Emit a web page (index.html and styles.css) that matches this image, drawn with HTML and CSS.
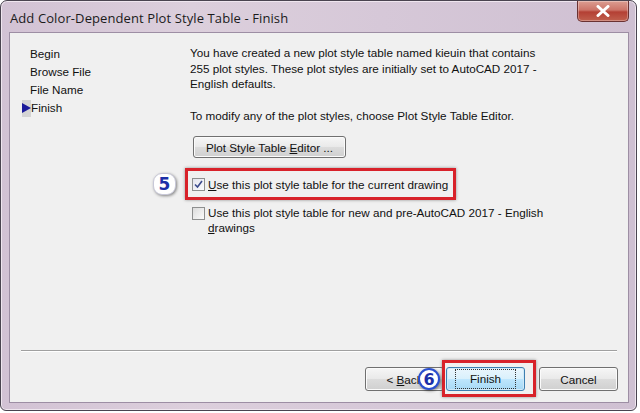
FILE: index.html
```html
<!DOCTYPE html>
<html>
<head>
<meta charset="utf-8">
<link rel="stylesheet" href="styles.css">
</head>
<body>
<div class="window">
  <div class="titlebar">
    <span class="title">Add Color-Dependent Plot Style Table - Finish</span>
    <div class="close">
      <svg width="14" height="12" viewBox="0 0 14 12"><path d="M2 1.5 L12 10.5 M12 1.5 L2 10.5" stroke="#fff" stroke-width="3" stroke-linecap="round"/></svg>
    </div>
  </div>
  <div class="client">
    <div class="main">
      <ul class="nav">
        <li>Begin</li>
        <li>Browse File</li>
        <li>File Name</li>
        <li class="current"><span class="marker"><svg width="9" height="10" viewBox="0 0 9 10"><path d="M0 0 L9 5 L0 10 Z" fill="#1a1a9a"/></svg></span>Finish</li>
      </ul>
      <div class="content">
        <p class="para">You have created a new plot style table named kieuin that contains 255 plot styles. These plot styles are initially set to AutoCAD 2017 - English defaults.</p>
        <p class="para second">To modify any of the plot styles, choose Plot Style Table Editor.</p>
        <button class="btn editor">Plot Style Table <u>E</u>ditor ...</button>
        <div class="check first">
          <span class="badge badge5">5</span>
          <span class="redbox box1"></span>
          <span class="cbox checked"><svg width="9" height="9" viewBox="0 0 9 9"><path d="M1 4.5 L3.5 7 L8 1" stroke="#3b4a8c" stroke-width="1.6" fill="none"/></svg></span>
          <span class="label"><u>U</u>se this plot style table for the current drawing</span>
        </div>
        <div class="check secondcheck">
          <span class="cbox"></span>
          <span class="label">Use this plot style table for new and pre-AutoCAD 2017 - English <u>d</u>rawings</span>
        </div>
      </div>
    </div>
    <div class="footer">
      <div class="sep"></div>
      <div class="buttons">
        <button class="btn">&lt; <u>B</u>ack</button>
        <button class="btn finish"><span class="badge badge6">6</span><span class="redbox box2"></span><span class="focus">Finish</span></button>
        <button class="btn">Cancel</button>
      </div>
    </div>
  </div>
</div>
</body>
</html>
```
FILE: styles.css
```css
* { box-sizing: border-box; }
html, body { margin: 0; padding: 0; background: #fff; }
body { width: 640px; height: 413px; overflow: hidden; font-family: "Liberation Sans", Arial, sans-serif; }

.window {
  width: 637px;
  height: 411px;
  border: 1px solid #4a4450;
  border-radius: 7px 7px 6px 6px;
  background: linear-gradient(90deg, #d2c2d4 0%, #dccfdc 30%, #d6c8d8 60%, #cfc0d2 100%);
  display: flex;
  flex-direction: column;
  padding: 0 7px 7px 8px;
  box-shadow: inset 0 0 0 1px #efe6ef;
}

.titlebar {
  height: 31px;
  display: flex;
  justify-content: space-between;
  align-items: flex-start;
}
.title {
  margin-top: 8px;
  padding-left: 1px;
  font-family: "Open Sans", "Liberation Sans", sans-serif;
  font-size: 13px;
  color: #1b1b1b;
  letter-spacing: 0.1px;
}
.close {
  width: 52px;
  height: 21px;
  border: 1px solid #6a3232;
  border-top: none;
  border-radius: 0 0 5px 5px;
  background: linear-gradient(#dc9e92 0%, #cc7468 45%, #b44034 55%, #c0604e 100%);
  display: flex;
  align-items: center;
  justify-content: center;
  box-shadow: inset 0 0 0 1px rgba(255,255,255,0.3);
}

.client {
  flex: 1;
  background: #f0f0f0;
  border: 1px solid #9d8ea4;
  display: flex;
  flex-direction: column;
  font-size: 11.7px;
  color: #111;
}

.main {
  flex: 1;
  display: flex;
}

.nav {
  list-style: none;
  margin: 0;
  padding: 12px 0 0 20px;
  width: 180px;
}
.nav li {
  height: 18px;
  line-height: 18px;
  position: relative;
}
.nav .current { margin-left: -8px; display: flex; align-items: center; }
.marker {
  width: 9px;
  height: 17px;
  background: #d4d4d4;
  display: flex;
  align-items: center;
}

.content {
  padding-top: 12px;
  width: 400px;
}
.para {
  margin: 0;
  line-height: 15.5px;
  width: 355px;
}
.para.second { margin-top: 16px; }

.btn {
  font-family: "Liberation Sans", Arial, sans-serif;
  font-size: 11.7px;
  color: #111;
  height: 22px;
  border: 1px solid #707070;
  border-radius: 3px;
  background: linear-gradient(#f6f6f6 0%, #e9e9e9 50%, #dcdcdc 51%, #d0d0d0 100%);
  padding: 0;
  position: relative;
  box-shadow: inset 0 0 0 1px #fbfbfb;
}
.btn.editor {
  margin: 13px 0 0 3px;
  width: 153px;
}

.check {
  display: flex;
  align-items: flex-start;
  position: relative;
  margin-left: 2px;
}
.check.first { margin-top: 19px; }
.check.secondcheck { margin-top: 13px; width: 375px; }
.check.secondcheck .cbox { margin-top: 2px; }
.cbox {
  width: 13px;
  height: 13px;
  border: 1px solid #8e8f8f;
  background: linear-gradient(135deg, #dcdcdc, #fbfbfb);
  flex: none;
  display: flex;
  align-items: center;
  justify-content: center;
  margin-top: 1px;
}
.cbox.checked { background: linear-gradient(135deg, #e4e4ee, #fbfbfd); }
.label {
  margin-left: 3px;
  line-height: 15px;
}

.redbox {
  position: absolute;
  border: 3px solid #d8222a;
  box-shadow: 0 0 3px rgba(0,0,0,0.4);
  pointer-events: none;
}
.box1 { left: -7px; top: -9px; width: 271px; height: 32px; }
.box2 { left: -5px; top: -8px; width: 94px; height: 37px; }

.badge {
  position: absolute;
  border-radius: 50%;
  background: #fff;
  color: #1c2fa8;
  font-family: "DejaVu Sans", sans-serif;
  font-weight: bold;
  display: flex;
  align-items: center;
  justify-content: center;
  box-shadow: 1px 1px 3px rgba(0,0,0,0.45);
}
.badge5 {
  left: -39px;
  top: -4px;
  width: 23px;
  height: 22px;
  font-size: 17px;
  border-radius: 9px;
  border: 1px solid #c8c8d8;
}
.badge6 {
  left: -29px;
  top: 0px;
  width: 22px;
  height: 22px;
  font-size: 16px;
  border: 2px solid #2a4fd0;
  z-index: 2;
}

.footer {
  height: 52px;
  display: flex;
  flex-direction: column;
}
.sep {
  margin: 0 11px 0 11px;
  height: 2px;
  border-top: 1px solid #a0a0a0;
  border-bottom: 1px solid #fff;
}
.buttons {
  display: flex;
  justify-content: flex-end;
  padding: 15px 10px 0 0;
}
.buttons .btn {
  width: 79px;
  height: 24px;
}
.buttons .finish {
  margin: 0 14px 0 2px;
  border-color: #3c7fb1;
  background: linear-gradient(#eaf6fd 0%, #d9f0fc 50%, #bee6fd 51%, #a7d9f5 100%);
  box-shadow: inset 0 0 0 1px #cfe9f8;
}
.focus {
  display: inline-block;
  outline: 1px dotted #333;
  outline-offset: 2px;
  padding: 0 12px;
  line-height: 14px;
}
```
